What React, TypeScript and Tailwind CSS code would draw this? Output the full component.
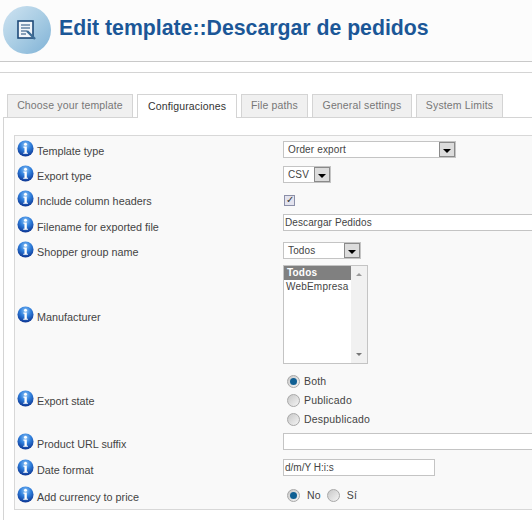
import React from 'react';

const labelFont = "[font-family:'Liberation_Sans',Arial,sans-serif]";

const InfoIcon = () => (
  <svg width="17" height="17" viewBox="0 0 18 18" className="shrink-0">
    <defs>
      <radialGradient id="infoBlue" cx="50%" cy="28%" r="75%">
        <stop offset="0%" stopColor="#8fc4f5" />
        <stop offset="45%" stopColor="#2f7fdc" />
        <stop offset="100%" stopColor="#0a2f8c" />
      </radialGradient>
    </defs>
    <circle cx="9" cy="9" r="8.5" fill="url(#infoBlue)" />
    <circle cx="9" cy="4.4" r="1.6" fill="#fff" />
    <path d="M6.8 7h3.6v6.4h1.2v1.2H6.6v-1.2h1.3V8.2H6.8z" fill="#fff" />
  </svg>
);

const SelectArrow = () => (
  <span className="flex h-[15px] w-[16px] items-center justify-center border border-[#8a8a8a] bg-[#dcdcdc]">
    <span className="mt-[3px] h-0 w-0 border-x-[4px] border-t-[4px] border-x-transparent border-t-black" />
  </span>
);

const Select = ({ value, className }: { value: string; className: string }) => (
  <div className={`flex h-[17px] items-center justify-between border border-[#c4c4c4] bg-white pl-[4px] text-[10px] tracking-[0.15px] text-[#444] ${className}`}>
    <span>{value}</span>
    <SelectArrow />
  </div>
);

const Radio = ({ checked }: { checked?: boolean }) => (
  <span className="flex h-[13px] w-[13px] shrink-0 items-center justify-center rounded-full border border-[#a8a8a8] bg-gradient-to-br from-[#c8c8c8] to-[#f4f4f4]">
    {checked && <span className="h-[7px] w-[7px] rounded-full bg-[#0f5f93]" />}
  </span>
);

interface RowProps {
  label: string;
  height: string;
  children?: React.ReactNode;
}

const Row = ({ label, height, children }: RowProps) => (
  <div className={`flex items-center ${height}`}>
    <div className="flex w-[268px] shrink-0 items-center pl-[2px]">
      <span className="-mt-[3px]">
        <InfoIcon />
      </span>
      <span className="ml-[3px] mt-[3px] text-[10.8px] leading-none text-[#444]">{label}</span>
    </div>
    <div className="min-w-0 flex-1">{children}</div>
  </div>
);

export default function App() {
  return (
    <div className={`h-[520px] w-[532px] overflow-hidden bg-white ${labelFont}`}>
      {/* Header */}
      <div className="flex h-[62px] items-center border-b border-[#c9c9c9] bg-[#fcfcfc] pl-[3px] pb-[6px] pt-[4px]">
        <div className="flex h-[48px] w-[48px] items-center justify-center rounded-full bg-gradient-to-br from-[#cfe3f1] via-[#a9cde4] to-[#7fb2d6]">
          <svg width="22" height="22" viewBox="0 0 22 22">
            <rect x="2" y="2" width="15" height="17" fill="#f2f6fa" stroke="#1f4a78" strokeWidth="1.6" />
            <path d="M5 6h9M5 9h9M5 12h6M5 15h5" stroke="#1f4a78" strokeWidth="1.2" />
            <path d="M11 12l8 8" stroke="#3d6d96" strokeWidth="2.4" />
          </svg>
        </div>
        <h1 className="ml-[8px] -mt-px text-[21.25px] font-bold leading-none text-[#1b5797]">Edit template::Descargar de pedidos</h1>
      </div>
      <div className="h-[11px] border-b border-[#d4d4d4] bg-white" />

      {/* Tabs */}
      <div className="mt-[20px] flex h-[24px] items-end gap-[4px] pl-[7px] text-[10.5px] tracking-[0.15px]">
        <div className="flex h-[23px] w-[126px] items-center justify-center border border-b-0 border-[#d4d4d4] bg-[#f0f0f0] text-[#777]">Choose your template</div>
        <div className="relative top-px flex h-[24px] w-[100px] items-center justify-center border border-b-0 border-[#d4d4d4] bg-white text-[#333]">Configuraciones</div>
        <div className="flex h-[23px] w-[67px] items-center justify-center border border-b-0 border-[#d4d4d4] bg-[#f0f0f0] text-[#777]">File paths</div>
        <div className="flex h-[23px] w-[100px] items-center justify-center border border-b-0 border-[#d4d4d4] bg-[#f0f0f0] text-[#777]">General settings</div>
        <div className="flex h-[23px] w-[87px] items-center justify-center border border-b-0 border-[#d4d4d4] bg-[#f0f0f0] text-[#777]">System Limits</div>
      </div>

      {/* Panel */}
      <div className="ml-[3px] h-[404px] border-l border-t border-[#d4d4d4] pl-[10px] pt-[17px]">
        <div className="w-[600px] border border-[#d8d8d8] bg-[#f9f9f9] pt-px">
          <Row label="Template type" height="h-[25px]">
            <Select value="Order export" className="w-[173px]" />
          </Row>
          <Row label="Export type" height="h-[25px]">
            <Select value="CSV" className="w-[48px]" />
          </Row>
          <Row label="Include column headers" height="h-[26px]">
            <span className="ml-px flex h-[11px] w-[11px] items-center justify-center border border-[#8b8fa8] bg-[#e3e3ee] text-[10px] leading-none text-[#333]">✓</span>
          </Row>
          <Row label="Filename for exported file" height="h-[25px]">
            <div className="mb-[6px] flex h-[17px] items-center border border-[#c4c4c4] bg-white pl-px text-[10px] tracking-[0.1px] text-[#444]">Descargar Pedidos</div>
          </Row>
          <Row label="Shopper group name" height="h-[25px]">
            <Select value="Todos" className="w-[78px]" />
          </Row>
          <Row label="Manufacturer" height="h-[106px]">
            <div className="mb-[3px] flex h-[99px] w-[85px] border border-[#c4c4c4] bg-white text-[10px] tracking-[0.2px] text-[#444]">
              <div className="w-[67px]">
                <div className="bg-[#808080] pl-[3px] font-semibold leading-[14px] text-white">Todos</div>
                <div className="pl-[2px] leading-[14px]">WebEmpresa</div>
              </div>
              <div className="flex flex-1 flex-col items-center justify-between bg-[#f1f1f1] py-[7px]">
                <span className="h-0 w-0 border-x-[3px] border-b-[3px] border-x-transparent border-b-[#999]" />
                <span className="h-0 w-0 border-x-[3px] border-t-[3px] border-x-transparent border-t-[#777]" />
              </div>
            </div>
          </Row>
          <Row label="Export state" height="h-[61px]">
            <div className="mt-[2px] flex flex-col gap-[6px] pl-[4px] text-[10.5px] leading-[13px] tracking-[0.2px] text-[#444]">
              <div className="flex items-center gap-[4px]"><Radio checked />Both</div>
              <div className="flex items-center gap-[4px]"><Radio />Publicado</div>
              <div className="flex items-center gap-[4px]"><Radio />Despublicado</div>
            </div>
          </Row>
          <Row label="Product URL suffix" height="h-[26px]">
            <div className="mb-[4px] h-[17px] border border-[#c4c4c4] bg-white" />
          </Row>
          <Row label="Date format" height="h-[26px]">
            <div className="mb-[4px] flex h-[17px] w-[152px] items-center border border-[#c4c4c4] bg-white pl-px text-[10px] text-[#444]">d/m/Y H:i:s</div>
          </Row>
          <Row label="Add currency to price" height="h-[27px]">
            <div className="flex items-center pl-[4px] text-[10.5px] tracking-[0.2px] text-[#444]">
              <Radio checked />
              <span className="ml-[7px]">No</span>
              <span className="ml-[6px]"><Radio /></span>
              <span className="ml-[7px]">Sí</span>
            </div>
          </Row>
        </div>
      </div>
    </div>
  );
}
